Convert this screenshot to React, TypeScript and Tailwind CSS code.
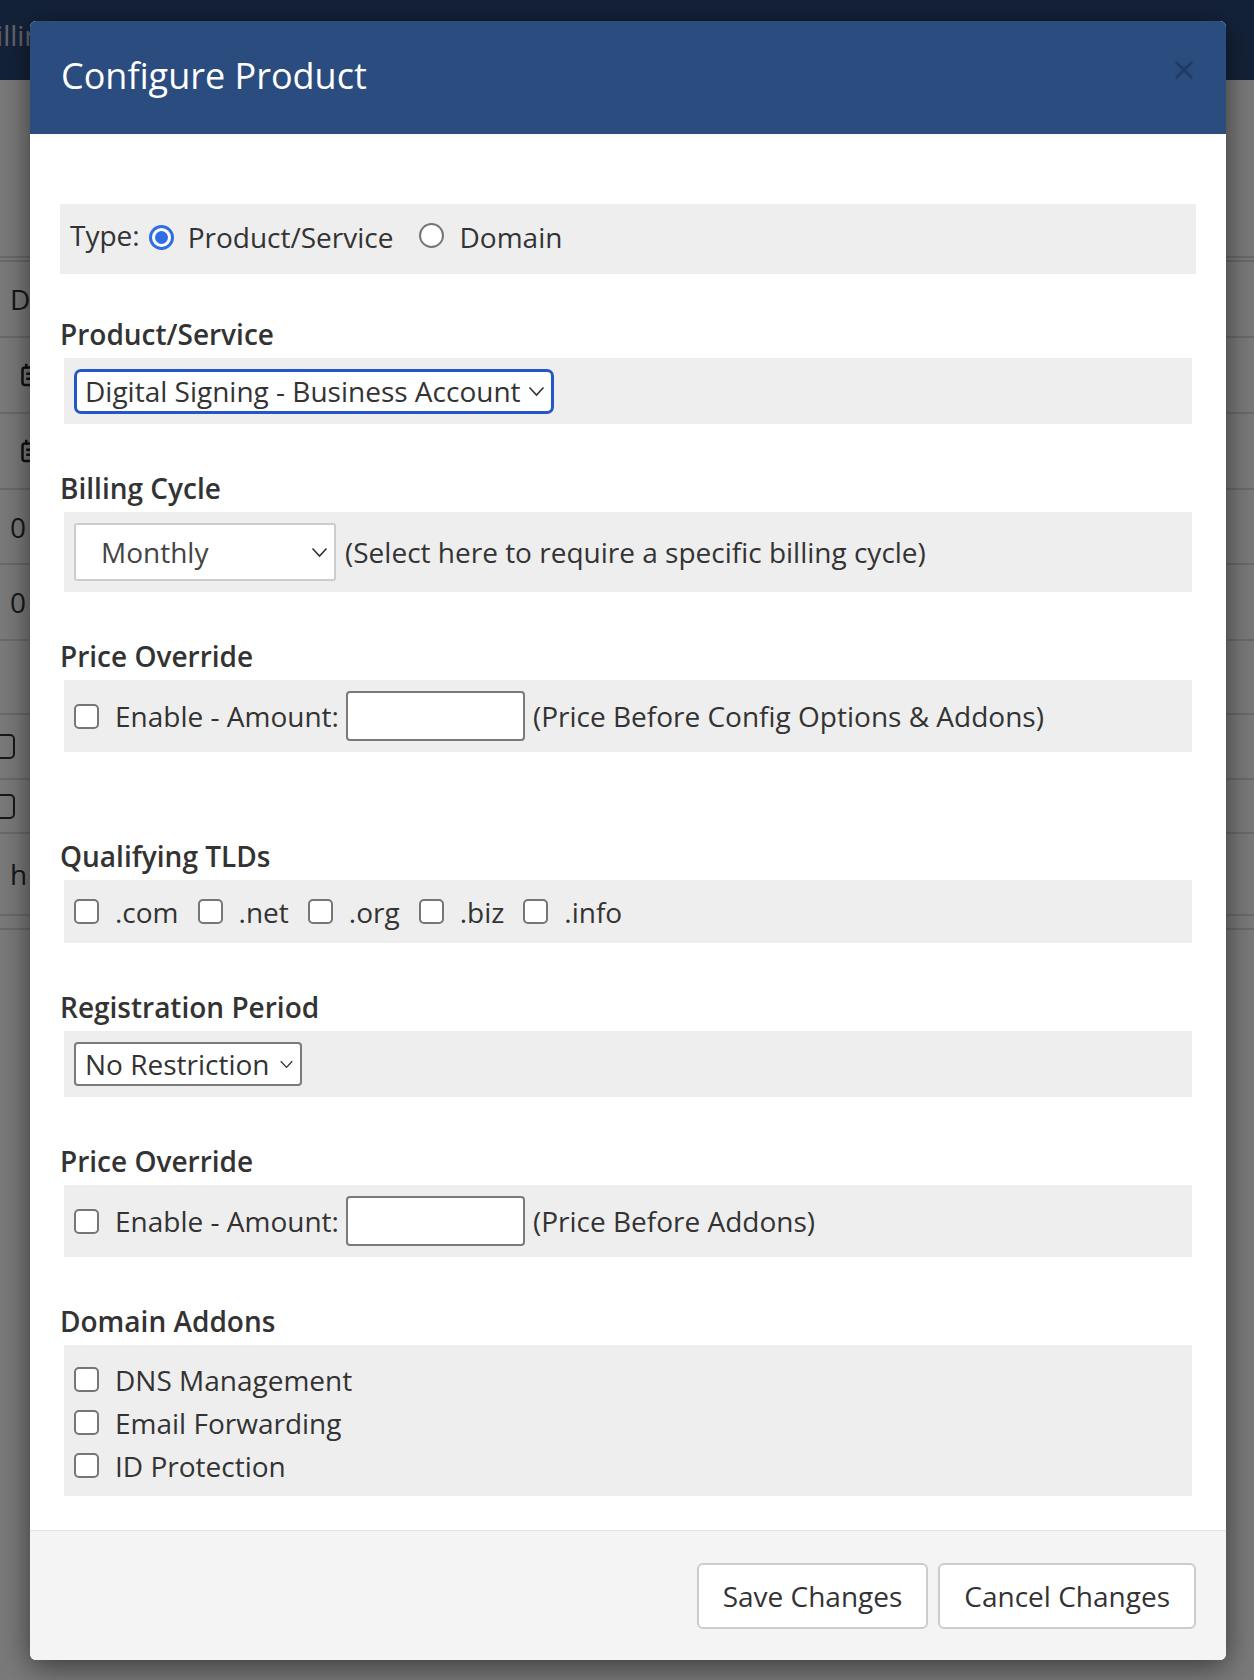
import React from "react";

const Chevron = ({ className }: { className?: string }) => (
  <svg viewBox="0 0 17 11" className={className} fill="none" stroke="#333" strokeWidth="1.6">
    <polyline points="1.5,1.5 8.5,9 15.5,1.5" />
  </svg>
);

const Checkbox = () => (
  <span className="inline-block h-[25px] w-[25px] shrink-0 rounded-[5px] border-2 border-[#767676] bg-white" />
);

const Radio = ({ checked }: { checked?: boolean }) =>
  checked ? (
    <span className="flex h-[25px] w-[25px] shrink-0 items-center justify-center rounded-full border-[3px] border-[#2f6fe4] bg-white">
      <span className="h-[13px] w-[13px] rounded-full bg-[#2f6fe4]" />
    </span>
  ) : (
    <span className="inline-block h-[25px] w-[25px] shrink-0 rounded-full border-2 border-[#767676] bg-white" />
  );

const Label = ({ children, top = "mt-[45px]" }: { children: React.ReactNode; top?: string }) => (
  <div className={`${top} mb-[5px] text-[28px] leading-[38px] font-semibold text-[#333]`}>{children}</div>
);

// rows of the page table that shows at the edges behind the overlay
const bgRows = [
  { h: 76, text: "D" },
  { h: 76, icon: true },
  { h: 76, icon: true },
  { h: 75, text: "0" },
  { h: 76, text: "0" },
  { h: 74 },
  { h: 65, box: true },
  { h: 54, box: true },
  { h: 82, text: "h" },
];

const CalendarIcon = () => (
  <svg viewBox="0 0 16 20" className="h-[26px] w-[20px]" fill="none" stroke="#222" strokeWidth="2">
    <rect x="2" y="4" width="12" height="14" rx="2" />
    <line x1="5" y1="1" x2="5" y2="5" />
    <line x1="5" y1="9" x2="11" y2="9" />
    <line x1="5" y1="13" x2="11" y2="13" />
  </svg>
);

const PriceRow = ({ note }: { note: string }) => (
  <div className="mx-[4px] flex h-[72px] items-center bg-[#eeeeee] px-[10px]">
    <Checkbox />
    <span className="ml-[16px]">Enable - Amount:</span>
    <span className="ml-[7px] h-[50px] w-[179px] rounded-[4px] border-2 border-[#7a7a7a] bg-white" />
    <span className="ml-[8px]">{note}</span>
  </div>
);

export default function App() {
  return (
    <div className="relative h-[1680px] w-full overflow-hidden bg-white font-['Open_Sans',sans-serif] text-[#333]">
      {/* page behind the dialog */}
      <div className="flex h-[80px] items-center bg-[#2b4778] pb-[10px] text-[28px] text-[#d0d6e2]">
        <span className="-ml-[22px]">Billing</span>
      </div>
      <div className="h-[182px] border-b-[6px] border-double border-[#dcdcdc]" />
      {bgRows.map((r, i) => (
        <div key={i} style={{ height: r.h }} className="flex items-center border-b-2 border-[#dedede] text-[28px] text-[#333]">
          {r.text && <span className="ml-[10px]">{r.text}</span>}
          {r.icon && <span className="ml-[20px]"><CalendarIcon /></span>}
          {r.box && <span className="-ml-[10px] h-[25px] w-[25px] rounded-[5px] border-2 border-[#333]" />}
        </div>
      ))}
      <div className="h-[14px] border-b-2 border-[#dedede]" />
      <div className="absolute inset-0 bg-black/[0.52]" />

      {/* modal */}
      <div className="absolute left-[30px] top-[21px] w-[1196px] overflow-hidden rounded-[6px] bg-white shadow-[0_6px_30px_rgba(0,0,0,0.55)]">
        <div className="flex h-[113px] items-start justify-between bg-[#2b4c7e] pl-[31px] pr-[32px]">
          <h2 className="mt-[30px] text-[36px] leading-[50px] font-normal text-white">Configure Product</h2>
          <svg viewBox="0 0 20 20" className="mt-[39px] h-[20px] w-[20px]" stroke="#1f3b64" strokeWidth="3">
            <line x1="2" y1="2" x2="18" y2="18" />
            <line x1="18" y1="2" x2="2" y2="18" />
          </svg>
        </div>

        <div className="px-[30px] pt-[70px] pb-[34px] text-[28px] leading-[38px]">
          <div className="flex h-[70px] items-center bg-[#eeeeee] px-[10px] pb-[4px]">
            <span className="-mt-[5px]">Type:</span>
            <span className="ml-[9px]"><Radio checked /></span>
            <span className="ml-[14px]">Product/Service</span>
            <span className="ml-[26px]"><Radio /></span>
            <span className="ml-[15px]">Domain</span>
          </div>

          <Label top="mt-[41px]">Product/Service</Label>
          <div className="mx-[4px] flex h-[66px] items-center bg-[#eeeeee] px-[10px]">
            <div className="flex h-[45px] w-[480px] items-center justify-between rounded-[7px] border-[3px] border-[#2456c9] bg-white pl-[8px] pr-[6px]">
              <span>Digital Signing - Business Account</span>
              <Chevron className="h-[11px] w-[17px]" />
            </div>
          </div>

          <Label>Billing Cycle</Label>
          <div className="mx-[4px] flex h-[80px] items-center bg-[#eeeeee] px-[10px]">
            <div className="flex h-[58px] w-[262px] items-center justify-between rounded-[3px] border-2 border-[#cccccc] bg-white pl-[25px] pr-[6px] text-[#444]">
              <span>Monthly</span>
              <Chevron className="h-[11px] w-[17px]" />
            </div>
            <span className="ml-[9px]">(Select here to require a specific billing cycle)</span>
          </div>

          <Label>Price Override</Label>
          <PriceRow note="(Price Before Config Options & Addons)" />

          <Label top="mt-[85px]">Qualifying TLDs</Label>
          <div className="mx-[4px] flex h-[63px] items-center bg-[#eeeeee] px-[10px]">
            {[".com", ".net", ".org", ".biz", ".info"].map((t) => (
              <span key={t} className="mr-[19px] flex items-center">
                <Checkbox />
                <span className="ml-[16px]">{t}</span>
              </span>
            ))}
          </div>

          <Label>Registration Period</Label>
          <div className="mx-[4px] flex h-[66px] items-center bg-[#eeeeee] px-[10px]">
            <div className="flex h-[44px] w-[228px] items-center justify-between rounded-[4px] border-2 border-[#7a7a7a] bg-white pl-[9px] pr-[6px]">
              <span>No Restriction</span>
              <Chevron className="h-[9px] w-[15px]" />
            </div>
          </div>

          <Label>Price Override</Label>
          <PriceRow note="(Price Before Addons)" />

          <Label>Domain Addons</Label>
          <div className="mx-[4px] bg-[#eeeeee] px-[10px] pt-[13px] pb-[9px]">
            {["DNS Management", "Email Forwarding", "ID Protection"].map((t) => (
              <div key={t} className="flex h-[43px] items-center">
                <Checkbox />
                <span className="ml-[16px]">{t}</span>
              </div>
            ))}
          </div>
        </div>

        <div className="flex h-[130px] items-center justify-end gap-[10px] border-t border-[#e3e3e3] bg-[#f4f4f4] pr-[30px] text-[28px] leading-[38px]">
          <button className="h-[66px] rounded-[6px] border-2 border-[#cccccc] bg-white px-[24px] text-[#333]">Save Changes</button>
          <button className="h-[66px] rounded-[6px] border-2 border-[#cccccc] bg-white px-[24px] text-[#333]">Cancel Changes</button>
        </div>
      </div>
    </div>
  );
}
